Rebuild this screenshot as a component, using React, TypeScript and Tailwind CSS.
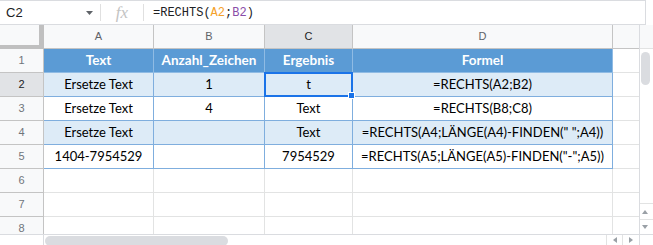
import React from "react";

const cellFont = "font-['Lato','Open_Sans',sans-serif]";

const tableRows = [
  ["Ersetze Text", "1", "t", "=RECHTS(A2;B2)"],
  ["Ersetze Text", "4", "Text", "=RECHTS(B8;C8)"],
  ["Ersetze Text", "", "Text", '=RECHTS(A4;LÄNGE(A4)-FINDEN(" ";A4))'],
  ["1404-7954529", "", "7954529", '=RECHTS(A5;LÄNGE(A5)-FINDEN("-";A5))'],
];

const widths = ["w-[110px]", "w-[111px]", "w-[88px]", "w-[260px]"];

function RowHeader({ n, selected, h = "h-[24px]" }: { n: number; selected?: boolean; h?: string }) {
  return (
    <div
      className={`w-[44px] ${h} shrink-0 flex items-center justify-center border-r border-b border-[#c4c4c4] text-[11px] font-['Liberation_Sans',Arial,sans-serif] ${
        selected ? "bg-[#e1e3e6] text-[#202124]" : "bg-[#f8f9fa] text-[#70757a]"
      }`}
    >
      {n}
    </div>
  );
}

function EmptyCells({ h = "h-[24px]" }: { h?: string }) {
  return (
    <>
      {widths.map((w, i) => (
        <div key={i} className={`${w} ${h} shrink-0 border-r border-b border-[#e2e3e3] bg-white`} />
      ))}
    </>
  );
}

export default function App() {
  return (
    <div className="w-[653px] h-[245px] overflow-hidden bg-white relative select-none">
      {/* Formula bar */}
      <div className="h-[25px] w-[646px] flex items-center border-t border-r border-b border-[#dadce0] bg-white">
        <div className="w-[100px] shrink-0 flex items-center justify-between pl-[6px] pr-[6px]">
          <span className="text-[13px] text-[#202124] font-['Liberation_Sans',Arial,sans-serif]">C2</span>
          <svg width="7" height="4" viewBox="0 0 7 4" className="mr-[1px]">
            <path d="M0 0 L7 0 L3.5 4 Z" fill="#5f6368" />
          </svg>
        </div>
        <div className="w-px h-[17px] bg-[#e0e0e0]" />
        <div className="w-[42px] shrink-0 flex items-center justify-center">
          <span className="italic text-[17px] leading-none text-[#c3c3c3] font-['Liberation_Serif','Times_New_Roman',serif]">fx</span>
        </div>
        <div className="w-px h-[17px] bg-[#e0e0e0]" />
        <div className="pl-[9px] text-[12px] text-[#202124] font-['Liberation_Mono','DejaVu_Sans_Mono',monospace] whitespace-nowrap">
          =RECHTS(<span className="text-[#f4a12a]">A2</span>;<span className="text-[#8a4ca8]">B2</span>)
        </div>
      </div>

      <div className="flex h-[209px]">
        {/* Grid */}
        <div className="w-[639px] flex flex-col">
          {/* column letters */}
          <div className="flex h-[24px] font-['Liberation_Sans',Arial,sans-serif] text-[11px]">
            <div className="w-[44px] h-[24px] shrink-0 bg-[#f8f9fa] border-r-[5px] border-b-[4px] border-[#c0c0c0]" />
            {["A", "B", "C", "D"].map((c, i) => (
              <div
                key={c}
                className={`${widths[i]} h-[24px] shrink-0 flex items-center justify-center border-r border-b border-[#c4c4c4] ${
                  c === "C" ? "bg-[#e1e3e6] text-[#202124]" : "bg-[#f8f9fa] text-[#5f6368]"
                }`}
              >
                {c}
              </div>
            ))}
            <div className="w-[26px] h-[24px] shrink-0 bg-[#f8f9fa] border-b border-[#c4c4c4]" />
          </div>

          {/* row 1: table header */}
          <div className="flex">
            <RowHeader n={1} />
            {["Text", "Anzahl_Zeichen", "Ergebnis", "Formel"].map((t, i) => (
              <div
                key={t}
                className={`${widths[i]} h-[24px] shrink-0 flex items-center justify-center whitespace-nowrap bg-[#5b9bd5] border-r border-b border-[#8fbbe4] text-white font-bold text-[13.5px] ${cellFont}`}
              >
                {t}
              </div>
            ))}
            <div className="w-[26px] h-[24px] shrink-0 border-b border-[#e2e3e3]" />
          </div>

          {/* data rows 2-5 */}
          {tableRows.map((r, ri) => (
            <div key={ri} className="flex">
              <RowHeader n={ri + 2} selected={ri === 0} />
              {r.map((t, i) => (
                <div
                  key={i}
                  className={`${widths[i]} h-[24px] shrink-0 relative flex items-center justify-center whitespace-nowrap border-r border-b border-[#7faede] text-black text-[13px] ${cellFont} ${
                    ri % 2 === 0 ? "bg-[#ddebf7]" : "bg-white"
                  }`}
                >
                  {t}
                  {ri === 0 && i === 2 && (
                    <div className="absolute -left-px -top-px w-[89px] h-[25px] border-2 border-[#1a73e8] z-10">
                      <div className="absolute -right-[4px] -bottom-[4px] w-[7px] h-[7px] bg-[#1a73e8] border border-white" />
                    </div>
                  )}
                </div>
              ))}
              <div className="w-[26px] h-[24px] shrink-0 border-b border-[#e2e3e3]" />
            </div>
          ))}

          {/* empty rows 6-8 */}
          {[6, 7].map((n) => (
            <div key={n} className="flex">
              <RowHeader n={n} />
              <EmptyCells />
              <div className="w-[26px] h-[24px] shrink-0 border-b border-[#e2e3e3]" />
            </div>
          ))}
          <div className="flex h-[17px] overflow-hidden">
            <RowHeader n={8} h="h-[24px]" />
            <EmptyCells />
            <div className="w-[26px] h-[24px] shrink-0" />
          </div>
        </div>

        {/* vertical scrollbar */}
        <div className="w-[14px] flex flex-col border-l border-[#dadce0]">
          <div className="h-[24px] bg-[#f8f9fa] border-b border-[#e2e3e3]" />
          <div className="flex-1 bg-white">
            <div className="ml-[1px] mt-[3px] w-[9px] h-[33px] rounded-full bg-[#dadce0]" />
          </div>
          <div className="h-[16px] flex items-center justify-center border-t border-[#e2e3e3]">
            <svg width="6" height="4" viewBox="0 0 6 4" className="-ml-[3px]">
              <path d="M0 4 L6 4 L3 0 Z" fill="#9aa0a6" />
            </svg>
          </div>
          <div className="h-[15px] flex items-center justify-center border-t border-[#e2e3e3]">
            <svg width="6" height="4" viewBox="0 0 6 4" className="-ml-[3px]">
              <path d="M0 0 L6 0 L3 4 Z" fill="#9aa0a6" />
            </svg>
          </div>
        </div>
      </div>

      {/* horizontal scrollbar */}
      <div className="h-[11px] flex border-t border-[#dadce0] bg-white">
        <div className="w-[44px] shrink-0 border-r border-[#dadce0]" />
        <div className="flex-1 pt-[1px] pl-[1px]">
          <div className="w-[183px] h-[10px] rounded-full bg-[#dadce0]" />
        </div>
        <div className="w-[16px] shrink-0 border-l border-[#e2e3e3] flex items-center justify-center">
          <svg width="4" height="6" viewBox="0 0 4 6">
            <path d="M4 0 L4 6 L0 3 Z" fill="#9aa0a6" />
          </svg>
        </div>
        <div className="w-[17px] shrink-0 border-l border-[#e2e3e3] flex items-center justify-center">
          <svg width="4" height="6" viewBox="0 0 4 6">
            <path d="M0 0 L0 6 L4 3 Z" fill="#9aa0a6" />
          </svg>
        </div>
        <div className="w-[14px] shrink-0 border-l border-[#dadce0]" />
      </div>
    </div>
  );
}
